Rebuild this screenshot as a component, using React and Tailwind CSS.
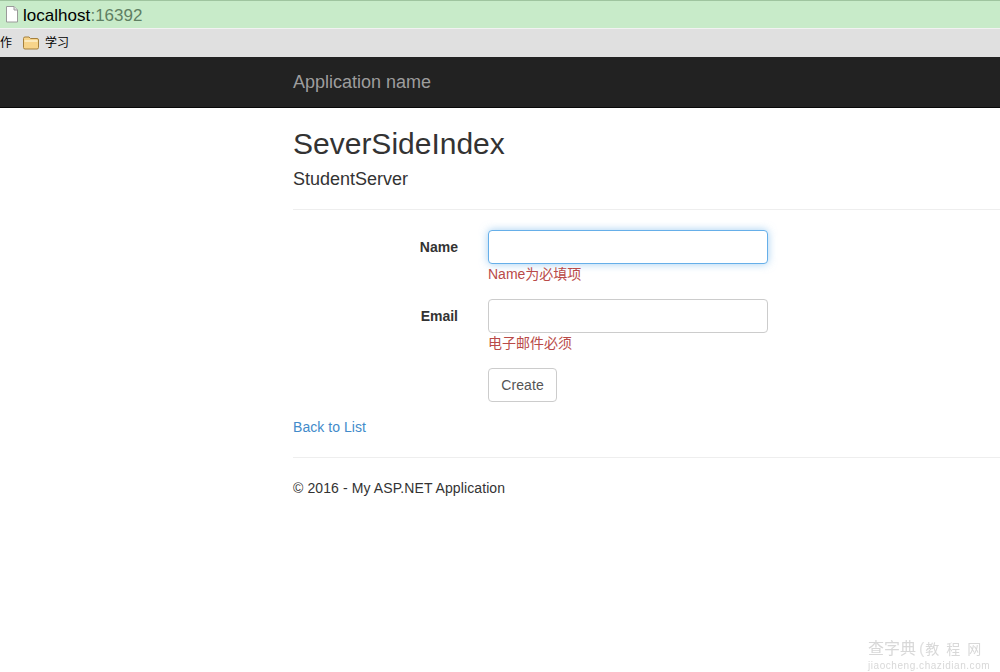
import React from 'react';

const PageIcon = () => (
  <svg width="14" height="17" viewBox="0 0 14 17" className="shrink-0">
    <path d="M1.5 .5H9L12.5 4V16H1.5Z" fill="#fff" stroke="#9a9a9a" strokeWidth="1" />
    <path d="M9 .5V4H12.5" fill="#e4e4e4" stroke="#9a9a9a" strokeWidth="1" />
  </svg>
);

const FolderIcon = () => (
  <svg width="16" height="14" viewBox="0 0 16 14" className="shrink-0">
    <path d="M.5 2.5Q.5 1 2 1H6L7.5 2.5H14Q15.5 2.5 15.5 4V11.5Q15.5 13 14 13H2Q.5 13 .5 11.5Z" fill="#f7d48a" stroke="#a5803c" strokeWidth="1" />
    <path d="M1.5 5H14.5" stroke="#fdf0cc" strokeWidth="1.5" />
  </svg>
);

const FormRow = ({ label, error, focused }) => (
  <div className="flex h-[69px]">
    <label className="w-[165px] pt-[7px] text-right text-[14px] leading-[20px] font-bold text-[#333]">{label}</label>
    <div className="ml-[30px] w-[280px]">
      <input
        type="text"
        className={focused
          ? 'block h-[34px] w-[280px] rounded border border-[#66afe9] bg-white outline-none shadow-[0_0_8px_rgba(102,175,233,0.6)]'
          : 'block h-[34px] w-[280px] rounded border border-[#ccc] bg-white outline-none'}
      />
      <p className="text-[14px] leading-[20px] text-[#b94a48]">{error}</p>
    </div>
  </div>
);

export default function App() {
  return (
    <div className="relative h-[672px] w-[1000px] overflow-hidden bg-white font-['Liberation_Sans','Noto_Sans_CJK_SC',sans-serif] text-[#333]">
      {/* browser chrome */}
      <div className="flex h-[28px] items-center gap-[4px] border-t border-[#9fc49f] bg-[#c8ebc9] pl-[5px]">
        <PageIcon />
        <span className="relative top-[1px] text-[17px] tracking-[0.03px] text-black">localhost<span className="text-[#5f7f63]">:16392</span></span>
      </div>
      <div className="flex h-[29px] items-center border-t border-[#f2f2f2] bg-[#e0e0e0] text-[12px] text-black">
        <span className="w-[23px] overflow-hidden">作</span>
        <FolderIcon />
        <span className="ml-[6px]">学习</span>
      </div>

      <div className="flex h-[51px] items-center border-b border-[#080808] bg-[#222] pl-[293px]">
        <span className="text-[18px] text-[#9d9d9d]">Application name</span>
      </div>

      <div className="pl-[293px]">
        <h2 className="mt-[19px] text-[30px] leading-[33px] text-[#333]">SeverSideIndex</h2>
        <h4 className="mt-[9px] text-[18px] leading-[20px] text-[#333]">StudentServer</h4>
        <hr className="mt-[20px] border-[#eee]" />

        <div className="mt-[20px]">
          <FormRow label="Name" error="Name为必填项" focused />
          <FormRow label="Email" error="电子邮件必须" />
          <div className="pl-[195px]">
            <button className="h-[34px] w-[69px] rounded border border-[#ccc] bg-white text-[14px] tracking-[0.1px] text-[#555]">Create</button>
          </div>
        </div>

        <a href="#" className="mt-[15px] block text-[14px] leading-[20px] tracking-[0.05px] text-[#428bca]">Back to List</a>
        <hr className="mt-[20px] border-[#eee]" />
        <p className="mt-[20px] text-[14px] leading-[20px] tracking-[0.1px] text-[#333]">© 2016 - My ASP.NET Application</p>
      </div>

      {/* watermark */}
      <div className="absolute right-[12px] bottom-[1px] w-[120px] text-[#d8d8d8] blur-[0.5px]">
        <div className="flex items-center whitespace-nowrap text-[16px] leading-[22px]">
          <span>查字典</span>
          <span className="ml-[3px] mr-[1px] text-[#e0e0e0]">(</span>
          <span className="text-[14px] tracking-[7px]">教程网</span>
        </div>
        <div className="text-[10px] leading-[11px] tracking-[0.55px] whitespace-nowrap">jiaocheng.chazidian.com</div>
      </div>
    </div>
  );
}
